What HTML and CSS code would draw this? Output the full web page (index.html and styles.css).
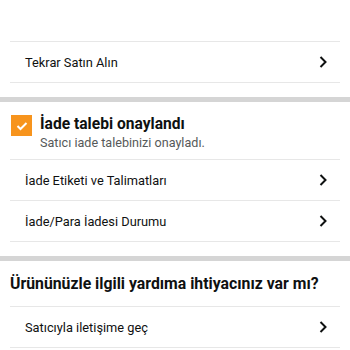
FILE: index.html
```html
<!DOCTYPE html>
<html lang="tr">
<head>
<meta charset="utf-8">
<link rel="stylesheet" href="styles.css">
</head>
<body>
<div class="section">
  <div class="spacer"></div>
  <div class="row"><span>Tekrar Satın Alın</span><svg class="chev" width="8" height="12" viewBox="0 0 8 12"><path d="M1.5 1 L6.5 6 L1.5 11" fill="none" stroke="#0f1111" stroke-width="2"/></svg></div>
  <div class="tail"></div>
</div>
<div class="bar"></div>
<div class="section">
  <div class="status">
    <div class="check"><svg width="12" height="10" viewBox="0 0 12 10"><path d="M1.5 5 L4.5 8 L10.5 2" fill="none" stroke="#fff" stroke-width="2"/></svg></div>
    <div class="status-text">
      <div class="title">İade talebi onaylandı</div>
      <div class="sub">Satıcı iade talebinizi onayladı.</div>
    </div>
  </div>
  <div class="row"><span>İade Etiketi ve Talimatları</span><svg class="chev" width="8" height="12" viewBox="0 0 8 12"><path d="M1.5 1 L6.5 6 L1.5 11" fill="none" stroke="#0f1111" stroke-width="2"/></svg></div>
  <div class="row"><span>İade/Para İadesi Durumu</span><svg class="chev" width="8" height="12" viewBox="0 0 8 12"><path d="M1.5 1 L6.5 6 L1.5 11" fill="none" stroke="#0f1111" stroke-width="2"/></svg></div>
  <div class="tail"></div>
</div>
<div class="bar"></div>
<div class="section">
  <div class="heading">Ürününüzle ilgili yardıma ihtiyacınız var mı?</div>
  <div class="row"><span>Satıcıyla iletişime geç</span><svg class="chev" width="8" height="12" viewBox="0 0 8 12"><path d="M1.5 1 L6.5 6 L1.5 11" fill="none" stroke="#0f1111" stroke-width="2"/></svg></div>
</div>
</body>
</html>
```
FILE: styles.css
```css
html, body {
  margin: 0;
  padding: 0;
  background: #fff;
  font-family: Roboto, "Noto Sans", sans-serif;
  color: #0f1111;
}
.section {
  padding: 0 10px;
}
.spacer {
  height: 41px;
  border-bottom: 1px solid #e7e7e7;
}
.row {
  height: 40px;
  border-bottom: 1px solid #e7e7e7;
  display: flex;
  align-items: center;
  justify-content: space-between;
  padding: 0 13px 0 15px;
  font-size: 12.8px;
}
.tail {
  height: 14px;
}
.bar {
  height: 5px;
  background: #d5d5d5;
}
.status {
  height: 58px;
  border-bottom: 1px solid #e7e7e7;
  display: flex;
  align-items: flex-start;
  padding-top: 13px;
  box-sizing: border-box;
  gap: 8px;
}
.check {
  width: 21px;
  height: 21px;
  background: #f7941d;
  margin-left: 1px;
  display: flex;
  align-items: center;
  justify-content: center;
  flex: none;
}
.title {
  font-size: 15.6px;
  font-weight: bold;
  line-height: 19px;
}
.sub {
  font-size: 12.6px;
  color: #565959;
  line-height: 17px;
}
.heading {
  height: 45px;
  border-bottom: 1px solid #e7e7e7;
  display: flex;
  align-items: center;
  font-size: 15.8px;
  font-weight: bold;
}
```
